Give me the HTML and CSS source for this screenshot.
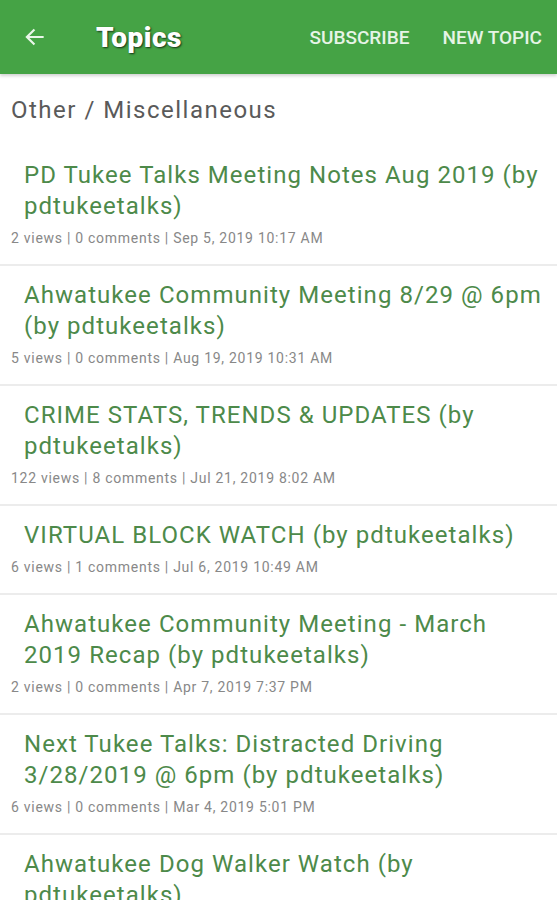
FILE: index.html
```html
<!DOCTYPE html>
<html>
<head>
<meta charset="utf-8">
<link rel="stylesheet" href="styles.css">
</head>
<body>
<header class="bar">
  <div class="back">
    <svg width="26" height="26" viewBox="0 0 24 24"><path d="M20 12H4.5M11.5 5l-7 7 7 7" fill="none" stroke="#eaf6ea" stroke-width="2"/></svg>
  </div>
  <div class="title">Topics</div>
  <div class="actions">
    <span class="act">SUBSCRIBE</span>
    <span class="act">NEW TOPIC</span>
  </div>
</header>
<div class="category">Other / Miscellaneous</div>
<ul class="list">
  <li class="item"><div class="t">PD Tukee Talks Meeting Notes Aug 2019 (by pdtukeetalks)</div><div class="m">2 views | 0 comments | Sep 5, 2019 10:17 AM</div></li>
  <li class="item"><div class="t">Ahwatukee Community Meeting 8/29 @ 6pm (by pdtukeetalks)</div><div class="m">5 views | 0 comments | Aug 19, 2019 10:31 AM</div></li>
  <li class="item"><div class="t">CRIME STATS, TRENDS &amp; UPDATES (by pdtukeetalks)</div><div class="m">122 views | 8 comments | Jul 21, 2019 8:02 AM</div></li>
  <li class="item"><div class="t">VIRTUAL BLOCK WATCH (by pdtukeetalks)</div><div class="m">6 views | 1 comments | Jul 6, 2019 10:49 AM</div></li>
  <li class="item"><div class="t">Ahwatukee Community Meeting - March 2019 Recap (by pdtukeetalks)</div><div class="m">2 views | 0 comments | Apr 7, 2019 7:37 PM</div></li>
  <li class="item"><div class="t">Next Tukee Talks: Distracted Driving 3/28/2019 @ 6pm (by pdtukeetalks)</div><div class="m">6 views | 0 comments | Mar 4, 2019 5:01 PM</div></li>
  <li class="item"><div class="t">Ahwatukee Dog Walker Watch (by pdtukeetalks)</div></li>
</ul>
</body>
</html>
```
FILE: styles.css
```css
html, body {
  margin: 0;
  padding: 0;
  background: #fff;
  font-family: Roboto, "Liberation Sans", sans-serif;
  overflow: hidden;
  height: 900px;
}
.bar {
  height: 74px;
  background: #45a345;
  display: flex;
  align-items: center;
  box-shadow: 0 2px 3px rgba(0,0,0,0.18);
  position: relative;
  z-index: 1;
}
.back {
  width: 26px;
  height: 26px;
  margin-left: 22px;
  display: flex;
}
.title {
  margin-left: 48px;
  color: #fff;
  font-size: 28px;
  font-weight: 900;
  text-shadow: 1px 1px 2px rgba(0,0,0,0.7);
  letter-spacing: 0.5px;
}
.actions {
  margin-left: auto;
  display: flex;
  gap: 33px;
  margin-right: 15px;
}
.act {
  color: #e6f4e6;
  font-size: 19px;
  font-weight: 500;
  letter-spacing: 0;
}
.category {
  padding: 21px 11px 20px;
  font-size: 24px;
  line-height: 31px;
  color: #5a5a5a;
  letter-spacing: 1.5px;
}
.list {
  list-style: none;
  margin: 0;
  padding: 0;
}
.item {
  padding: 14px 11px 17px;
  border-bottom: 2px solid #ececec;
}
.t {
  padding-left: 13px;
  font-size: 24px;
  line-height: 31px;
  color: #4d8a4a;
  letter-spacing: 1.05px;
}
.m {
  margin-top: 7px;
  font-size: 14px;
  line-height: 18px;
  color: #888;
  letter-spacing: 0.72px;
}
```
